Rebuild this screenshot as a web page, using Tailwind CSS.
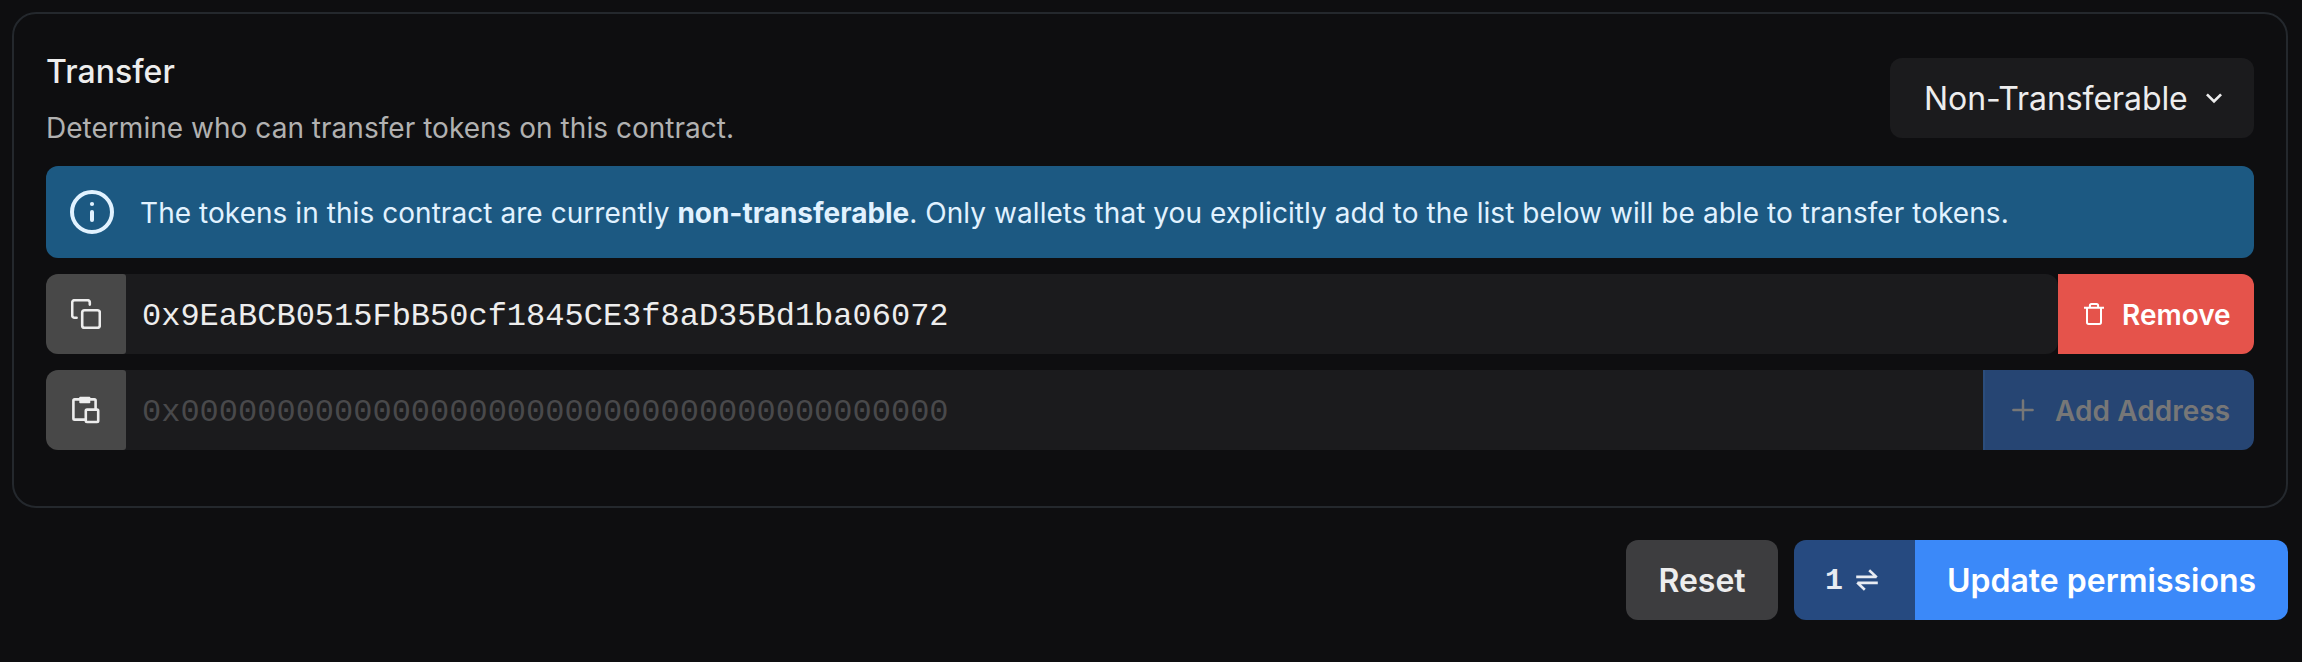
<!DOCTYPE html>
<html lang="en">
<head>
<meta charset="utf-8">
<title>Permissions</title>
<script src="https://cdn.jsdelivr.net/npm/@tailwindcss/browser@4"></script>
</head>
<body class="bg-[#0e0e10] font-['Inter',sans-serif] text-[#ededed] w-[2302px] h-[662px] overflow-hidden">
<main class="flex flex-col pt-3 pl-3 pr-3.5">
  <section class="h-[496px] border-2 border-[#24282d] rounded-3xl px-8 pt-11">
    <header class="flex justify-between h-[108px]">
      <div>
        <h2 class="text-[32px] leading-[38px] font-medium tracking-[0.06px] mt-[-5px]">Transfer</h2>
        <p class="text-[28px] leading-[42px] tracking-[0.03px] text-[#b1b1b1] mt-4">Determine who can transfer tokens on this contract.</p>
      </div>
      <button class="w-[364px] h-20 rounded-xl bg-[#1b1b1d] flex items-center pl-[34px] text-[32px] tracking-[-0.07px]">
        <span class="pt-px">Non-Transferable</span>
        <svg class="ml-2.5 size-8" viewBox="0 0 24 24" fill="#ededed"><path d="M16.59 8.59 12 13.17 7.41 8.59 6 10l6 6 6-6z"/></svg>
      </button>
    </header>
    <div class="h-[92px] rounded-xl bg-[#1c5982] text-[#e1f2ff] flex items-center pl-6">
      <svg class="size-11 shrink-0" viewBox="0 0 44 44" fill="none" stroke="currentColor"><circle cx="22" cy="22" r="20" stroke-width="4"/><circle cx="22" cy="14" r="2.1" fill="currentColor" stroke="none"/><path d="M22 22v8" stroke-width="4" stroke-linecap="round"/></svg>
      <p class="ml-[26px] pt-0.5 text-[28px] tracking-[0.055px]">The tokens in this contract are currently <b class="font-bold tracking-[-0.02px]">non-transferable</b>. Only wallets that you explicitly add to the list below will be able to transfer tokens.</p>
    </div>
    <div class="mt-4 flex h-20">
      <button class="w-20 rounded-l-xl rounded-r-[3px] bg-[#484848] flex items-center justify-center z-10">
        <svg class="size-[30px]" viewBox="0 0 30 30" fill="none" stroke="currentColor" stroke-width="2.6" stroke-linecap="round"><rect x="11.2" y="11.2" width="17.6" height="17.6" rx="2.4"/><path d="M5.6 18.8H3.6a2.4 2.4 0 0 1-2.4-2.4V3.6a2.4 2.4 0 0 1 2.4-2.4h12.8a2.4 2.4 0 0 1 2.4 2.4v2"/></svg>
      </button>
      <div class="-ml-1 flex-1 rounded-r-xl bg-[#1b1b1d] pl-5 pt-[5px] flex items-center text-[32px] font-['Liberation_Mono',monospace]">0x9EaBCB0515FbB50cf1845CE3f8aD35Bd1ba06072</div>
      <button class="w-[196px] rounded-r-xl bg-[#e5534b] text-white flex items-center pl-6 text-[28px] font-semibold">
        <svg class="size-6" viewBox="0 0 24 24" fill="none" stroke="currentColor" stroke-width="2" stroke-linejoin="round"><path d="M2 5.7h20M5 5.7v14.6a1.6 1.6 0 0 0 1.6 1.6h10.8a1.6 1.6 0 0 0 1.6-1.6V5.7M7.9 5.7V3.6A1.6 1.6 0 0 1 9.5 2h5a1.6 1.6 0 0 1 1.6 1.6v2.1"/></svg>
        <span class="ml-4 pt-0.5">Remove</span>
      </button>
    </div>
    <div class="mt-4 flex h-20">
      <button class="w-20 rounded-l-xl rounded-r-[3px] bg-[#484848] flex items-center justify-center z-10">
        <svg class="size-8" viewBox="0 0 32 32" fill="none" stroke="currentColor" stroke-width="2.6"><path d="M15 25.6H4.6a1.2 1.2 0 0 1-1.2-1.2V6.6a1.2 1.2 0 0 1 1.2-1.2h19.8a1.2 1.2 0 0 1 1.2 1.2V15"/><rect x="15.8" y="15.6" width="12.4" height="12.4" rx="1.2"/><rect x="9.3" y="2.8" width="11" height="6.4" rx="0.8" fill="currentColor" stroke="none"/></svg>
      </button>
      <div class="-ml-1 flex-1 bg-[#1b1b1d] pl-5 pt-[5px] flex items-center text-[32px] text-[#49494b] font-['Liberation_Mono',monospace]">0x0000000000000000000000000000000000000000</div>
      <button class="w-[271px] rounded-r-xl border-l-2 border-[#2b4d7c] bg-[#264573] text-[#777777] flex items-center pl-[26px] text-[28px] font-semibold">
        <svg class="size-6" viewBox="0 0 24 24" fill="none" stroke="currentColor" stroke-width="2.5" stroke-linecap="round"><path d="M12 2.4v19.2M2.4 12h19.2"/></svg>
        <span class="ml-5 pt-0.5 tracking-[0.05px]">Add Address</span>
      </button>
    </div>
  </section>
  <footer class="mt-8 flex justify-end h-20 text-[32px] font-semibold">
    <button class="w-[152px] rounded-xl bg-[#3d3d3f] pt-0.5">Reset</button>
    <div class="ml-4 flex">
      <span class="w-[121px] rounded-l-xl bg-[#264a80] text-[#e7ebf2] flex items-center pl-[31px]">
        <span class="pt-[3px] text-[30px] font-bold font-['Liberation_Mono',monospace]">1</span>
        <svg class="ml-3 size-6" viewBox="0 0 24 24" fill="none" stroke="currentColor" stroke-width="2.6"><path d="M1.2 8.9h20.3M14.2 2.2l7.6 7.2M22.8 14.9H2.5M9.8 21.8 2.2 14.5"/></svg>
      </span>
      <button class="w-[373px] rounded-r-xl bg-[#3b89f9] text-white pt-0.5">Update permissions</button>
    </div>
  </footer>
</main>
</body>
</html>
